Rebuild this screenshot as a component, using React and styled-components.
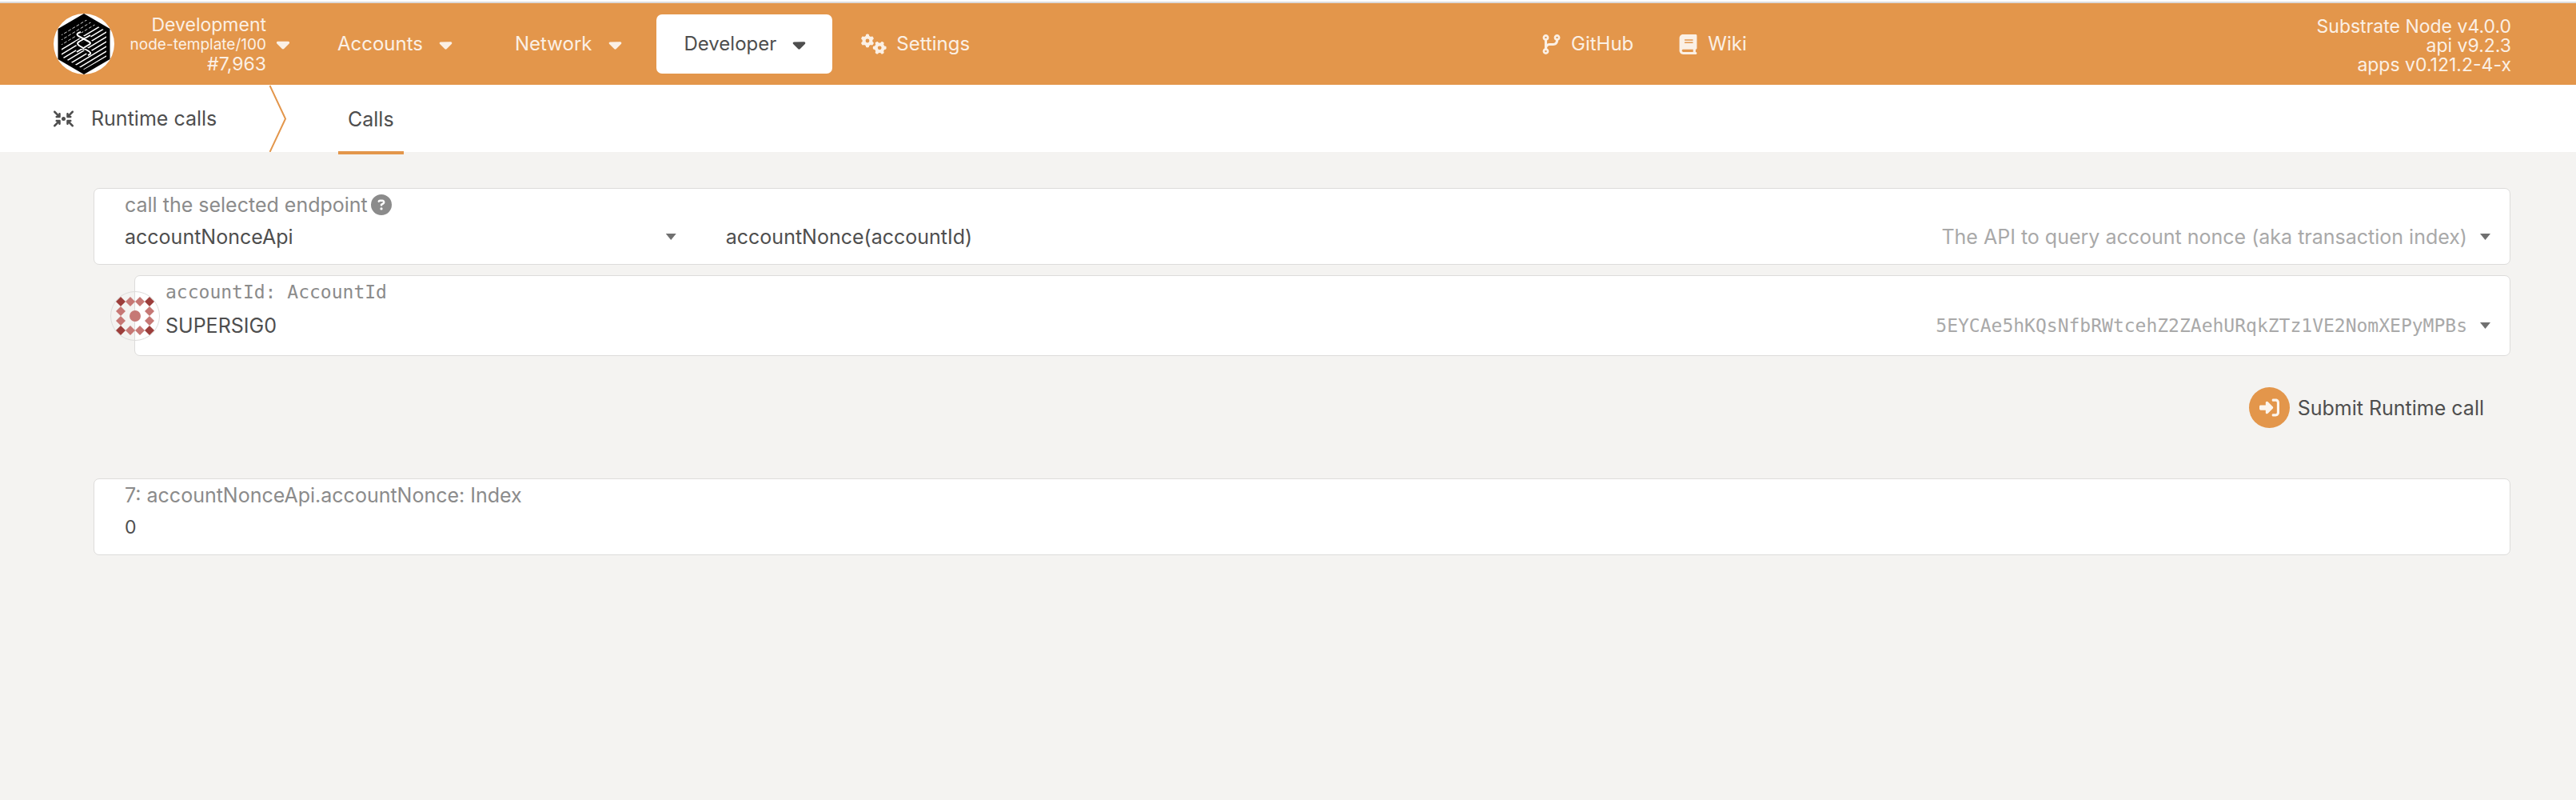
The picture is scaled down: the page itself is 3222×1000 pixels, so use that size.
import React from 'react';
import styled, { createGlobalStyle } from 'styled-components';
import {
  FaArrowsToCircle,
  FaBook,
  FaCaretDown,
  FaCircleQuestion,
  FaCodeBranch,
  FaGears,
  FaRightToBracket,
} from 'react-icons/fa6';

const orange = '#e3964b';
const cream = '#fbf0e5';
const ink = '#4e4e4e';
const muted = '#8b8b8b';
const sans = 'Inter, "Liberation Sans", sans-serif';
const mono = '"DejaVu Sans Mono", "Liberation Mono", monospace';

const GlobalStyle = createGlobalStyle`
  *, *::before, *::after { box-sizing: border-box; }
  html { background: #f4f3f1; }
  body {
    margin: 0;
    color: ${ink};
    font-family: ${sans};
    font-size: 25px;
    line-height: 30px;
  }
  button, select { font: inherit; color: inherit; }
  svg { flex: none; display: block; }
`;

const Page = styled.div`
  border-top: 2px solid #fff;
`;

const TopBar = styled.header`
  display: flex;
  align-items: center;
  height: 104px;
  padding: 0 81px 0 67px;
  border-top: 2px solid #dcdbdb;
  background: ${orange};
  color: ${cream};
  font-size: 24px;
`;

const ChainButton = styled.button`
  display: flex;
  align-items: center;
  gap: 8px;
  padding: 0;
  border: 0;
  background: none;
  cursor: pointer;
`;

const ChainInfo = styled.span`
  display: flex;
  flex-direction: column;
  width: 182px;
  padding-top: 1px;
  text-align: right;
  font-size: 23px;
  line-height: 25px;
`;

const ChainSpec = styled.span`
  font-size: 19px;
  line-height: 24px;
`;

const Menu = styled.nav`
  display: flex;
  gap: 10px;
  margin-left: 20px;
`;

const MenuButton = styled.button`
  display: flex;
  align-items: center;
  gap: 16px;
  height: 74px;
  padding: 0 29px 0 35px;
  border: 0;
  border-radius: 7px;
  background: ${(p) => (p.$active ? '#fff' : 'transparent')};
  color: ${(p) => (p.$active ? ink : cream)};
  cursor: pointer;
`;

const MenuLink = styled.a`
  display: flex;
  align-items: center;
  gap: 12px;
  height: 74px;
  padding: 0 26px;
  color: inherit;
  text-decoration: none;
`;

const External = styled.nav`
  display: flex;
  justify-content: center;
  gap: 4px;
  flex: 1;
  padding-right: 24px;
`;

const Versions = styled.div`
  padding-top: 4px;
  text-align: right;
  font-size: 23px;
  line-height: 24px;
`;

const SubBar = styled.div`
  display: flex;
  height: 84px;
  padding-left: 67px;
  background: #fff;
`;

const Section = styled.h1`
  display: flex;
  align-items: center;
  gap: 22px;
  width: 270px;
  margin: 0;
  font-size: 25px;
  font-weight: 400;
`;

const Tab = styled.a`
  display: flex;
  align-items: center;
  height: 87px;
  margin-left: 65px;
  padding: 0 12px;
  border-top: 2px solid transparent;
  border-bottom: 4px solid ${orange};
  color: inherit;
  text-decoration: none;
`;

const Content = styled.main`
  padding: 45px 82px 40px 117px;
`;

const Card = styled.section`
  position: relative;
  padding: 5px 24px 14px 38px;
  border: 1px solid #dddcdb;
  border-radius: 7px;
  background: #fff;
`;

const ParamCard = styled(Card)`
  display: flex;
  flex-direction: column;
  gap: 7px;
  margin: 13px 0 0 51px;
  padding-bottom: 17px;
`;

const Label = styled.label`
  display: flex;
  align-items: center;
  gap: 4px;
  height: 30px;
  color: ${muted};
  font-family: ${(p) => (p.$mono ? mono : sans)};
  font-size: ${(p) => (p.$mono ? 23 : 25)}px;
`;

const Controls = styled.div`
  display: grid;
  grid-template-columns: 5fr 16fr;
  column-gap: 62px;
  margin-top: 5px;
`;

const Picker = styled.div`
  display: grid;
  align-items: center;

  & > * { grid-area: 1 / 1; }
`;

const Select = styled.select`
  width: 100%;
  height: 40px;
  padding: 0;
  border: 0;
  appearance: none;
  background: none;
  cursor: pointer;
`;

const Hint = styled.span`
  display: flex;
  align-items: center;
  gap: 16px;
  justify-self: end;
  color: #a9a9a9;
  font-family: ${(p) => (p.$mono ? mono : sans)};
  font-size: ${(p) => (p.$mono ? 23 : 25)}px;
  pointer-events: none;
`;

const Arrow = styled.span`
  width: 13px;
  height: 8px;
  background: #707070;
  clip-path: polygon(0 0, 100% 0, 50% 100%);
`;

const IconSlot = styled.span`
  position: absolute;
  left: -31px;
  top: 19px;
`;

const Actions = styled.div`
  display: flex;
  justify-content: flex-end;
  padding: 39px 33px 63px 0;
`;

const Submit = styled.button`
  display: flex;
  align-items: center;
  gap: 10px;
  padding: 0;
  border: 0;
  background: none;
  cursor: pointer;
`;

const SubmitIcon = styled.span`
  display: grid;
  place-items: center;
  width: 51px;
  height: 51px;
  border-radius: 50%;
  background: ${orange};
  color: #fcf5ee;
`;

const Result = styled.output`
  display: block;
  height: 40px;
  margin-top: 5px;
  font-size: 23px;
  line-height: 40px;
`;

const hatch = Array.from({ length: 15 }, (_, i) => -26 + i * 6);

function Logo() {
  return (
    <svg width="76" height="76" viewBox="0 0 76 76" aria-hidden="true">
      <defs>
        <clipPath id="hatch">
          <path d="M38 6 66 22V54L38 70 10 54V22Z" />
        </clipPath>
      </defs>
      <circle cx="38" cy="38" r="38" fill="#fff" />
      <path d="M38 0 70.500 19V57L38 76 5.500 57V19Z" fill="#000" />
      <g clipPath="url(#hatch)" stroke="#fff">
        {hatch.map((y, i) => (
          <path
            key={y}
            d={`M8 ${y + 36} 68 ${y}`}
            strokeWidth={i < 6 ? 0.8 : 1.5}
            strokeDasharray={i < 6 ? '4 2' : undefined}
          />
        ))}
      </g>
      <g fill="none" strokeLinejoin="round">
        <path
          d="M34 23 29 26 46 36 29 47M46 28 29 37 46 48 42 51"
          stroke="#000"
          strokeWidth="5"
        />
        <path
          d="M34 23Q27 25 31 28L44 35Q48 37 44 39L29 48M46 27 32 35Q28 37 32 40L44 47Q49 50 43 52"
          stroke="#fff"
          strokeWidth="2"
        />
      </g>
    </svg>
  );
}

const gems = [
  [13, 13, 1], [25, 13, 0], [37, 13, 0], [49, 13, 1],
  [13, 25, 0], [49, 25, 0], [13, 37, 0], [49, 37, 0],
  [13, 49, 1], [25, 49, 0], [37, 49, 0], [49, 49, 1],
];

function Identicon() {
  return (
    <svg width="62" height="62" viewBox="0 0 62 62" aria-hidden="true">
      <circle cx="31" cy="31" r="30.500" fill="none" stroke="#dddcdb" />
      {gems.map(([x, y, dark]) => (
        <path
          key={`${x}-${y}`}
          d={`M${x} ${y - 6}l6 6-6 6-6-6z`}
          fill={dark ? '#9c3e3b' : '#c67875'}
        />
      ))}
      <circle cx="31" cy="31" r="7" fill="#c67875" />
    </svg>
  );
}

export default function App() {
  return (
    <Page>
      <GlobalStyle />
      <TopBar>
        <ChainButton type="button">
          <Logo />
          <ChainInfo>
            <span>Development</span>
            <ChainSpec>node-template/100</ChainSpec>
            <span>#7,963</span>
          </ChainInfo>
          <FaCaretDown size={26} />
        </ChainButton>
        <Menu>
          <MenuButton type="button">Accounts<FaCaretDown size={25} /></MenuButton>
          <MenuButton type="button">Network<FaCaretDown size={25} /></MenuButton>
          <MenuButton type="button" $active>Developer<FaCaretDown size={25} /></MenuButton>
          <MenuLink href="#settings"><FaGears size={32} />Settings</MenuLink>
        </Menu>
        <External>
          <MenuLink href="#github"><FaCodeBranch size={25} />GitHub</MenuLink>
          <MenuLink href="#wiki"><FaBook size={25} />Wiki</MenuLink>
        </External>
        <Versions>
          <div>Substrate Node v4.0.0</div>
          <div>api v9.2.3</div>
          <div>apps v0.121.2-4-x</div>
        </Versions>
      </TopBar>

      <SubBar>
        <Section><FaArrowsToCircle size={25} />Runtime calls</Section>
        <svg width="21" height="84" viewBox="0 0 21 84" fill="none" stroke={orange} strokeWidth="2" aria-hidden="true">
          <path d="M.500 1 20 42.500.500 84" />
        </svg>
        <Tab href="#calls">Calls</Tab>
      </SubBar>

      <Content>
        <Card>
          <Label htmlFor="endpoint">
            call the selected endpoint
            <FaCircleQuestion size={26} />
          </Label>
          <Controls>
            <Picker>
              <Select id="endpoint"><option>accountNonceApi</option></Select>
              <Hint><Arrow /></Hint>
            </Picker>
            <Picker>
              <Select aria-label="method"><option>accountNonce(accountId)</option></Select>
              <Hint>The API to query account nonce (aka transaction index)<Arrow /></Hint>
            </Picker>
          </Controls>
        </Card>

        <ParamCard>
          <IconSlot><Identicon /></IconSlot>
          <Label htmlFor="account" $mono>accountId: AccountId</Label>
          <Picker>
            <Select id="account"><option>SUPERSIG0</option></Select>
            <Hint $mono>5EYCAe5hKQsNfbRWtcehZ2ZAehURqkZTz1VE2NomXEPyMPBs<Arrow /></Hint>
          </Picker>
        </ParamCard>

        <Actions>
          <Submit type="button">
            <SubmitIcon><FaRightToBracket size={25} /></SubmitIcon>
            Submit Runtime call
          </Submit>
        </Actions>

        <Card>
          <Label htmlFor="result">7: accountNonceApi.accountNonce: Index</Label>
          <Result id="result">0</Result>
        </Card>
      </Content>
    </Page>
  );
}
